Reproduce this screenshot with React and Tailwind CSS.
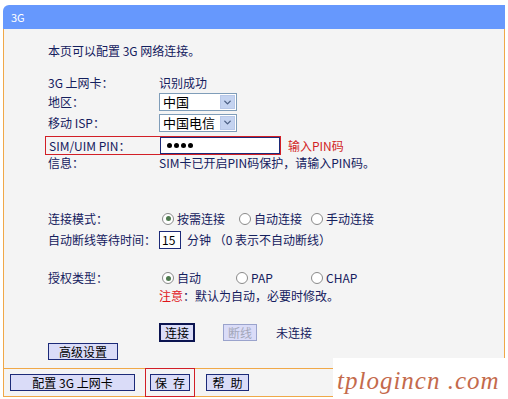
import { ChevronDown } from 'lucide-react';

const font = "font-['SimSun','Noto_Sans_CJK_SC',sans-serif]";

function Select({ value }) {
  return (
    <div className="flex h-[18px] w-[78px] items-stretch border border-[#7f9db9] bg-white">
      <span className="flex-1 pl-[3px] text-[13px] leading-[16px] text-black">{value}</span>
      <span className="m-[1px] flex w-[15px] items-center justify-center border border-[#b8c8e8] bg-[#c4d3f0]">
        <ChevronDown size={11} strokeWidth={3} className="text-[#4d6185]" />
      </span>
    </div>
  );
}

function Radio({ checked, label, className = '' }) {
  return (
    <span className={`flex items-center gap-[3px] ${className}`}>
      <span className="flex h-[12px] w-[12px] items-center justify-center rounded-full border border-[#8a8a8a] bg-white">
        {checked && <span className="h-[5px] w-[5px] rounded-full bg-[#4f7a4f]" />}
      </span>
      <span>{label}</span>
    </span>
  );
}

// old style lavender button
function Btn({ children, className = '', tone = 'text-black' }) {
  return (
    <button className={`flex h-[17px] items-center justify-center border bg-[#dadcf8] px-[4px] text-[12px] leading-[15px] ${tone} ${className}`}>
      {children}
    </button>
  );
}

function Row({ label, children, className = '' }) {
  return (
    <div className={`flex items-center ${className}`}>
      <span className="w-[111px] shrink-0">{label}</span>
      {children}
    </div>
  );
}

export default function App() {
  return (
    <div className={`relative h-[399px] w-[508px] overflow-hidden bg-white ${font} text-[12px] text-[#14205e]`}>
      <div className="ml-[3px] mt-[5px] w-[502px]">
        <div className="flex h-[24px] items-center rounded-tl-[6px] bg-[#6698fd] pl-[8px] text-[11px] text-white">3G</div>

        <div className="border-x border-[#f0a848] bg-[#f4f4f4] pl-[44px]">
          <div className="flex h-[43px] items-center">本页可以配置 3G 网络连接。</div>

          <div className="mt-[1px]">
            <Row label="3G 上网卡：" className="h-[19px]">
              <span>识别成功</span>
            </Row>
            <Row label="地区：" className="h-[20px]">
              <Select value="中国" />
            </Row>
            <Row label="移动 ISP：" className="h-[21px]">
              <Select value="中国电信" />
            </Row>
            <div className="mt-[3px] flex items-center">
              <div className="-ml-[3px] flex h-[19px] w-[236px] items-center border border-[#d21f26] pl-[3px]">
                <span className="w-[111px] shrink-0">SIM/UIM PIN：</span>
                <span className="flex h-[17px] w-[120px] items-center gap-[2px] border border-[#1c2a78] bg-white pl-[6px]">
                  <span className="h-[5px] w-[5px] rounded-full bg-black" />
                  <span className="h-[5px] w-[5px] rounded-full bg-black" />
                  <span className="h-[5px] w-[5px] rounded-full bg-black" />
                  <span className="h-[5px] w-[5px] rounded-full bg-black" />
                </span>
              </div>
              <span className="ml-[7px] text-[#d21f26]">输入PIN码</span>
            </div>
            <Row label="信息：" className="h-[15px]">
              <span>SIM卡已开启PIN码保护，请输入PIN码。</span>
            </Row>

            <Row label="连接模式：" className="mt-[39px] h-[19px]">
              <span className="flex items-center">
                <Radio checked label="按需连接" className="ml-[3px]" />
                <Radio label="自动连接" className="ml-[14px]" />
                <Radio label="手动连接" className="ml-[9px]" />
              </span>
            </Row>
            <Row label="自动断线等待时间：" className="mt-[2px] h-[19px]">
              <span className="flex items-center">
                <span className="flex h-[18px] w-[22px] items-center border border-[#1c2a78] bg-white pl-[2px] text-[12px] text-black">15</span>
                <span className="ml-[6px]">分钟 （0 表示不自动断线）</span>
              </span>
            </Row>

            <Row label="授权类型：" className="mt-[20px] h-[18px]">
              <span className="flex items-center">
                <Radio checked label="自动" className="ml-[3px] w-[74px]" />
                <Radio label="PAP" className="w-[75px]" />
                <Radio label="CHAP" />
              </span>
            </Row>
            <Row label="" className="h-[17px]">
              <span>
                <span className="text-[#e0141b]">注意</span>：默认为自动，必要时修改。
              </span>
            </Row>

            <Row label="" className="mt-[19px] h-[19px]">
              <span className="flex items-center">
                <Btn className="h-[19px] border-2 border-[#0b1450] px-[3px]">连接</Btn>
                <Btn className="ml-[28px] border-[#9aa3cc]" tone="text-[#a3a7ba]">断线</Btn>
                <span className="ml-[19px]">未连接</span>
              </span>
            </Row>
            <div className="h-[26px] pt-[1px]">
              <Btn className="w-[70px] border-[#1c2a78]">高级设置</Btn>
            </div>
          </div>
        </div>

        <div className="flex h-[29px] items-center border border-[#f0a848] bg-[#f4f4f4] pl-[6px]">
          <Btn className="w-[125px] border-[#1c2a78]">配置 3G 上网卡</Btn>
          <span className="ml-[10px] flex h-[29px] items-center border border-[#d21f26] px-[4px]">
            <Btn className="w-[40px] border-[#1c2a78]">
              <span className="mr-[6px]">保</span>存
            </Btn>
          </span>
          <Btn className="ml-[11px] w-[43px] border-[#1c2a78]">
            <span className="mr-[6px]">帮</span>助
          </Btn>
        </div>
      </div>

      <div className="absolute bottom-0 right-0 flex h-[41px] w-[175px] items-end bg-white pb-[6px] pl-[4px]">
        <span className="font-['Liberation_Serif',serif] text-[25px] italic leading-none tracking-[1px] text-[#c46a4c]">
          tplogincn .com
        </span>
      </div>
    </div>
  );
}
